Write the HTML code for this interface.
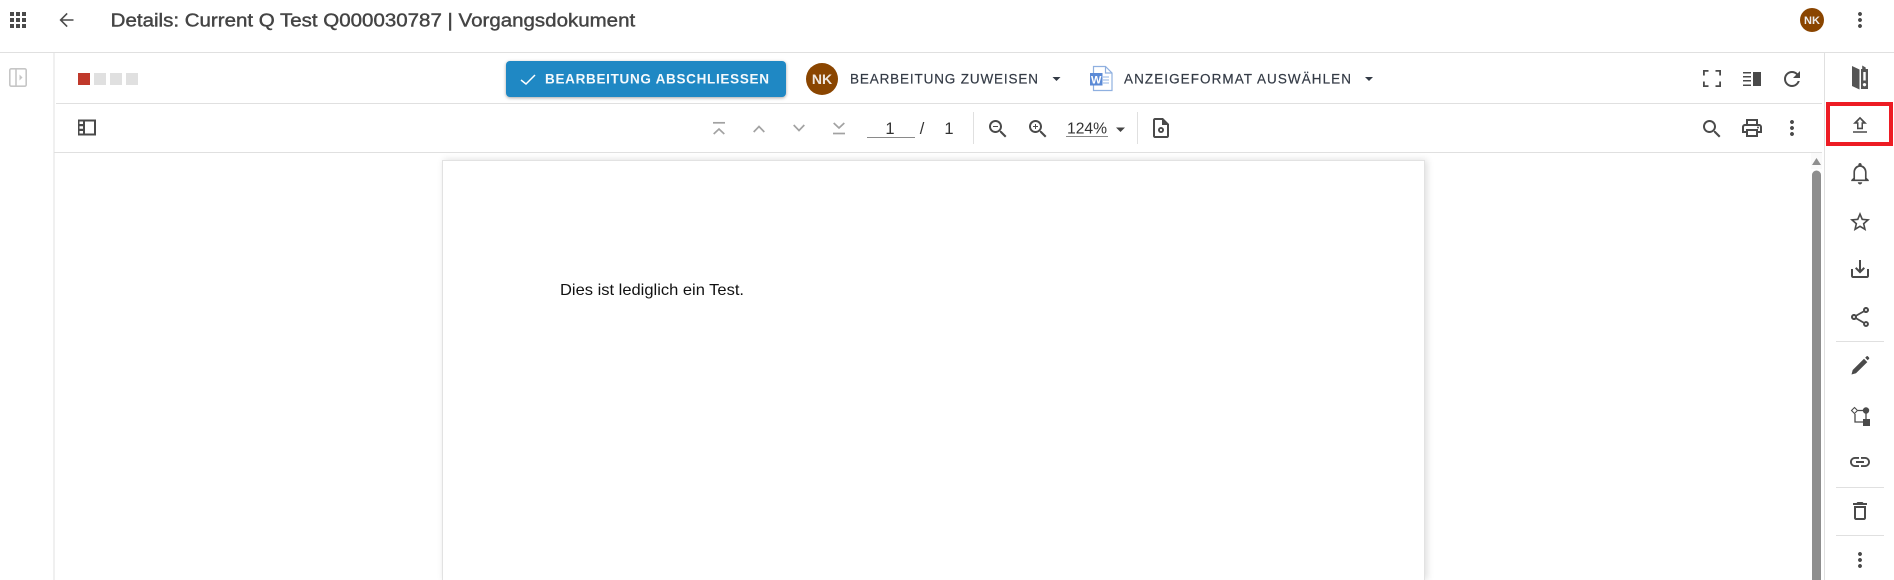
<!DOCTYPE html>
<html lang="de"><head><meta charset="utf-8"><title>Details: Current Q Test Q000030787 | Vorgangsdokument</title>
<style>
html,body{margin:0;padding:0;width:1894px;height:580px;overflow:hidden;background:#fff}
.pg{position:absolute;left:442px;top:160px;width:983px;height:420px;background:#fff;border:1px solid #e2e2e2;border-bottom:none;box-sizing:border-box;box-shadow:2px 0 7px rgba(0,0,0,.14)}
.btn{position:absolute;left:506px;top:61px;width:280px;height:36px;background:#1f88c4;border-radius:4px;box-shadow:0 1px 3px rgba(0,0,0,.35)}
.clip{position:absolute;left:0;top:0;width:1894px;height:580px;overflow:hidden}
svg{position:absolute;left:0;top:0}
text{font-family:"Liberation Sans",sans-serif}
</style></head><body>
<div class="clip"><div class="pg"></div><div class="btn"></div>
<svg width="1894" height="580" viewBox="0 0 1894 580" xmlns="http://www.w3.org/2000/svg">
<!-- lines -->
<g fill="#e0e0e0">
<rect x="0" y="52" width="1894" height="1"/>
<rect x="53.500" y="52" width="1" height="528"/>
<rect x="56" y="103" width="1766" height="1"/>
<rect x="54" y="152" width="1768" height="1"/>
<rect x="1824" y="52" width="1" height="528"/>
<rect x="973" y="112" width="1" height="32"/>
<rect x="1137" y="112" width="1" height="32"/>
<rect x="1836" y="341" width="48" height="1"/>
<rect x="1836" y="487" width="48" height="1"/>
<rect x="1836" y="535" width="48" height="1"/>
</g>
<!-- top bar -->
<g fill="#4a4a4a">
<path transform="translate(6,8)" d="M4 8h4V4H4v4zm6 12h4v-4h-4v4zm-6 0h4v-4H4v4zm0-6h4v-4H4v4zm6 0h4v-4h-4v4zm6-10v4h4V4h-4zm-6 4h4V4h-4v4zm6 6h4v-4h-4v4zm0 6h4v-4h-4v4z"/>
<path d="M73.500 19.200H62.500l5.200-5.200-1.100-1.100L59.500 20l7.100 7.100 1.100-1.100-5.200-5.200h11z"/>
<path transform="translate(1848,8)" d="M12 8c1.100 0 2-.9 2-2s-.9-2-2-2-2 .9-2 2 .9 2 2 2zm0 2c-1.100 0-2 .9-2 2s.9 2 2 2 2-.9 2-2-.9-2-2-2zm0 6c-1.100 0-2 .9-2 2s.9 2 2 2 2-.9 2-2-.9-2-2-2z"/>
</g>
<text x="110.700" y="26.500" font-size="18" fill="#444" stroke="#444" stroke-width=".4" textLength="524.500" lengthAdjust="spacingAndGlyphs">Details: Current Q Test Q000030787 | Vorgangsdokument</text>
<circle cx="1812" cy="20" r="12" fill="#8a4500"/>
<text x="1812" y="24" font-size="11" font-weight="bold" fill="#eee" text-anchor="middle">NK</text>
<!-- left rail icon -->
<g fill="none" stroke="#c6c6c6" stroke-width="1.600">
<rect x="9.800" y="68.800" width="16.400" height="17.400" rx="1.500"/>
<path d="M16 69v17"/>
</g>
<path d="M19.500 74.500l3 3-3 3z" fill="#c6c6c6"/>
<!-- status squares -->
<rect x="78" y="73" width="12" height="12" fill="#c0392b"/>
<rect x="94" y="73" width="12" height="12" fill="#e0e0e0"/>
<rect x="110" y="73" width="12" height="12" fill="#e0e0e0"/>
<rect x="126" y="73" width="12" height="12" fill="#e0e0e0"/>
<!-- button -->
<polyline points="521,80 526,84 535,75" fill="none" stroke="#fff" stroke-width="1.500"/>
<text x="545" y="83.500" font-size="13.500" font-weight="bold" fill="#f4f9fc" textLength="224" lengthAdjust="spacing">BEARBEITUNG ABSCHLIESSEN</text>
<circle cx="822" cy="79" r="16" fill="#8a4500"/>
<text x="822" y="84" font-size="14" font-weight="bold" fill="#f0e8e0" text-anchor="middle">NK</text>
<text x="850" y="83.500" font-size="13.500" fill="#333a45" stroke="#333a45" stroke-width=".2" textLength="188" lengthAdjust="spacing">BEARBEITUNG ZUWEISEN</text>
<path d="M1052.500 77h8l-4 4z" fill="#333a45"/>
<!-- word icon -->
<path d="M1093.500 66.500h12l6.500 6.500v17.500h-18.500z" fill="#fff" stroke="#8fb0e0" stroke-width="1.200"/>
<path d="M1105.500 66.500v6.500h6.500" fill="none" stroke="#8fb0e0" stroke-width="1.200"/>
<path d="M1103 77h6M1103 80h6M1103 83h6" stroke="#a9c3ea" stroke-width="1.200"/>
<rect x="1090" y="73" width="12.500" height="12.500" fill="#5b8ad6"/>
<text x="1096.200" y="83.500" font-size="11" font-weight="bold" fill="#fff" text-anchor="middle">W</text>
<text x="1124" y="83.500" font-size="13.500" fill="#333a45" stroke="#333a45" stroke-width=".2" textLength="227" lengthAdjust="spacing">ANZEIGEFORMAT AUSWÄHLEN</text>
<path d="M1365 77h8l-4 4z" fill="#333a45"/>
<!-- row1 right icons -->
<g fill="none" stroke="#4a4a4a" stroke-width="1.800">
<path d="M1703.900 75.500v-4.600h4.600M1715.500 70.900h4.600v4.600M1720.100 81.500v4.600h-4.600M1708.500 86.100h-4.600v-4.600"/>
</g>
<g fill="#4a4a4a">
<rect x="1743" y="72" width="8" height="1.500"/><rect x="1743" y="76" width="8" height="1.500"/><rect x="1743" y="80" width="8" height="1.500"/><rect x="1743" y="84.500" width="8" height="1.500"/>
<rect x="1753" y="72" width="8" height="14"/>
<path transform="translate(1780,67)" d="M17.650 6.350C16.200 4.900 14.210 4 12 4c-4.420 0-7.990 3.580-7.990 8s3.570 8 7.990 8c3.730 0 6.840-2.550 7.730-6h-2.080c-.82 2.330-3.040 4-5.650 4-3.310 0-6-2.690-6-6s2.690-6 6-6c1.660 0 3.140.69 4.220 1.780L13 11h7V4l-2.350 2.350z"/>
</g>
<!-- row2 -->
<path d="M78 119.500h18v16H78zM85 121.500v12h9v-12zM79.500 121.500v2.500h3.500v-2.500zM79.500 126.300v2.500h3.500v-2.500zM79.500 131v2.500h3.500v-2.500z" fill="#4a4a4a" fill-rule="evenodd"/>
<g fill="none" stroke="#a2a2a2" stroke-width="1.700">
<path d="M713 122.800h12"/><path d="M713.700 134l5.300-5 5.300 5"/>
<path d="M753.700 132l5.300-5.500 5.300 5.500"/>
<path d="M793.700 125l5.300 5.500 5.300-5.500"/>
<path d="M833.700 123l5.300 5 5.300-5"/><path d="M833 133.500h12"/>
</g>
<rect x="867" y="137" width="48" height="1" fill="#8a8a8a"/>
<g fill="#333" font-size="16.500">
<text x="890" y="134" text-anchor="middle">1</text>
<text x="922" y="134" text-anchor="middle">/</text>
<text x="949" y="134" text-anchor="middle">1</text>
</g>
<text x="1067" y="133.500" font-size="16" fill="#333" textLength="40" lengthAdjust="spacingAndGlyphs">124%</text>
<rect x="1066" y="136" width="42" height="1" fill="#8a8a8a"/>
<path d="M1116 127.500h9l-4.500 4.500z" fill="#444"/>
<g fill="#4a4a4a">
<path transform="translate(986,117)" d="M15.500 14h-.79l-.28-.27C15.410 12.590 16 11.110 16 9.500 16 5.910 13.090 3 9.500 3S3 5.910 3 9.500 5.910 16 9.500 16c1.610 0 3.090-.59 4.230-1.570l.27.28v.79l5 4.990L20.490 19l-4.990-5zm-6 0C7.010 14 5 11.990 5 9.500S7.010 5 9.500 5 14 7.010 14 9.500 11.990 14 9.500 14zM7 9h5v1H7z"/>
<path transform="translate(1026,117)" d="M15.500 14h-.79l-.28-.27C15.410 12.590 16 11.110 16 9.500 16 5.910 13.090 3 9.500 3S3 5.910 3 9.500 5.910 16 9.500 16c1.610 0 3.090-.59 4.230-1.570l.27.28v.79l5 4.990L20.490 19l-4.990-5zm-6 0C7.010 14 5 11.990 5 9.500S7.010 5 9.500 5 14 7.010 14 9.500 11.990 14 9.500 14zM12 10h-2v2H9v-2H7V9h2V7h1v2h2v1z"/>
<path transform="translate(1149,116)" d="M14 2H6c-1.100 0-2 .9-2 2v16c0 1.100.9 2 2 2h12c1.100 0 2-.9 2-2V8l-6-6zm4 18H6V4h7v5h5v11z"/>
<circle cx="1161" cy="130" r="3"/><circle cx="1161" cy="130" r="1.100" fill="#fff"/>
<path transform="translate(1700,117)" d="M15.500 14h-.79l-.28-.27C15.410 12.590 16 11.110 16 9.500 16 5.910 13.090 3 9.500 3S3 5.910 3 9.500 5.910 16 9.500 16c1.610 0 3.090-.59 4.230-1.570l.27.28v.79l5 4.990L20.490 19l-4.990-5zm-6 0C7.010 14 5 11.990 5 9.500S7.010 5 9.500 5 14 7.010 14 9.500 11.990 14 9.500 14z"/>
<path transform="translate(1740,116)" d="M19 8h-1V3H6v5H5c-1.660 0-3 1.340-3 3v6h4v4h12v-4h4v-6c0-1.660-1.340-3-3-3zM8 5h8v3H8V5zm8 12v2H8v-4h8v2zm2-2v-2H6v2H4v-4c0-.55.45-1 1-1h14c.55 0 1 .45 1 1v4h-2z"/>
<circle cx="1758" cy="127.500" r="1"/>
<path transform="translate(1780,116)" d="M12 8c1.100 0 2-.9 2-2s-.9-2-2-2-2 .9-2 2 .9 2 2 2zm0 2c-1.100 0-2 .9-2 2s.9 2 2 2 2-.9 2-2-.9-2-2-2zm0 6c-1.100 0-2 .9-2 2s.9 2 2 2 2-.9 2-2-.9-2-2-2z"/>
</g>
<!-- document text -->
<text x="560" y="295" font-size="16" fill="#111" textLength="184" lengthAdjust="spacingAndGlyphs">Dies ist lediglich ein Test.</text>
<!-- scrollbar -->
<rect x="1811" y="153" width="11" height="16" fill="#fafafa"/>
<path d="M1812 165l4.500-7 4.500 7z" fill="#8e8e8e"/>
<path d="M1812 580V175a4.500 4.500 0 0 1 9 0v405z" fill="#8e8e8e"/>
<!-- right rail -->
<g fill="#4a4a4a">
<path d="M1852 66l7.500 3.500v20l-7.500-3.500z" fill="#555"/>
<path d="M1861 69l1.200 0 0-3.500 3.500 2 0 1.500h2.300v20h-7zM1863.300 72v8.500h2.400v-8.500zM1864.500 83a1.700 1.700 0 1 0 .01 0z" fill-rule="evenodd" fill="#555"/>
<path d="M1860 116.800l-7 7h4v5.400h6v-5.400h4zM1860 119l2.800 3.200h-1.300v5.400h-3v-5.400h-1.300zM1853 131.200h14v1.600h-14z" fill-rule="evenodd"/>
<path transform="translate(1846.800,160.250) scale(1.100)" d="M12 22c1.100 0 2-.9 2-2h-4c0 1.100.9 2 2 2zm6-6v-5c0-3.070-1.630-5.640-4.500-6.320V4c0-.83-.67-1.500-1.500-1.500s-1.500.67-1.500 1.500v.68C7.640 5.360 6 7.920 6 11v5l-2 2v1h16v-1l-2-2zm-1.500 1.500H7.500V11c0-2.480 2-5 4.500-5s4.500 2.520 4.500 5v6.500z"/>
<path transform="translate(1848,210)" d="M22 9.240l-7.190-.62L12 2 9.190 8.630 2 9.240l5.460 4.730L5.820 21 12 17.270 18.180 21l-1.630-7.030L22 9.240zM12 15.400l-3.760 2.270 1-4.280-3.320-2.880 4.380-.38L12 6.100l1.710 4.040 4.380.38-3.320 2.880 1 4.280L12 15.400z"/>
<path transform="translate(1848,257)" d="M19 12v7H5v-7H3v7c0 1.100.9 2 2 2h14c1.100 0 2-.9 2-2v-7h-2zm-6 .67l2.590-2.580L17 11.500l-5 5-5-5 1.410-1.410L11 12.670V3h2z"/>
<path transform="translate(1848,305)" d="M18 16.080c-.76 0-1.440.3-1.960.77L8.910 12.700c.05-.23.09-.46.09-.7s-.04-.47-.09-.7l7.050-4.110c.54.5 1.250.81 2.040.81 1.660 0 3-1.340 3-3s-1.340-3-3-3-3 1.340-3 3c0 .24.04.47.09.7L8.040 9.810C7.500 9.310 6.790 9 6 9c-1.660 0-3 1.340-3 3s1.340 3 3 3c.79 0 1.500-.31 2.040-.81l7.120 4.160c-.05.21-.08.43-.08.65 0 1.610 1.310 2.920 2.920 2.920s2.920-1.310 2.920-2.920-1.310-2.920-2.920-2.920zM18 4c.55 0 1 .45 1 1s-.45 1-1 1-1-.45-1-1 .45-1 1-1zM6 13c-.55 0-1-.45-1-1s.45-1 1-1 1 .45 1 1-.45 1-1 1zm12 7.020c-.55 0-1-.45-1-1s.45-1 1-1 1 .45 1 1-.45 1-1 1z"/>
<path d="M1851.500 374.500l1.200-4.500L1864 358.800l3.300 3.300L1856 373.300zM1865.200 357.700l1.300-1.300a1 1 0 0 1 1.400 0l1.100 1.100a1 1 0 0 1 0 1.400l-1.300 1.300z"/>
<circle cx="1866" cy="410.500" r="3.200"/>
<rect x="1863" y="419" width="7" height="7"/>
<path d="M1858 410.500h5M1855 414v8h8M1866 413v6" fill="none" stroke="#4a4a4a" stroke-width="1.300"/>
<path d="M1854.500 407.500l3 3-3 3-3-3z" fill="#fff" stroke="#4a4a4a" stroke-width="1.100"/>
<path transform="translate(1848,450)" d="M3.900 12c0-1.710 1.390-3.100 3.100-3.100h4V7H7c-2.760 0-5 2.240-5 5s2.240 5 5 5h4v-1.900H7c-1.710 0-3.100-1.390-3.100-3.100zM8 13h8v-2H8v2zm9-6h-4v1.900h4c1.710 0 3.100 1.390 3.100 3.100s-1.390 3.100-3.100 3.100h-4V17h4c2.760 0 5-2.240 5-5s-2.240-5-5-5z"/>
<path transform="translate(1848,499)" d="M6 19c0 1.100.9 2 2 2h8c1.100 0 2-.9 2-2V7H6v12zM8 9h8v10H8V9zm7.500-5l-1-1h-5l-1 1H5v2h14V4h-3.500z"/>
<path transform="translate(1848,548)" d="M12 8c1.100 0 2-.9 2-2s-.9-2-2-2-2 .9-2 2 .9 2 2 2zm0 2c-1.100 0-2 .9-2 2s.9 2 2 2 2-.9 2-2-.9-2-2-2zm0 6c-1.100 0-2 .9-2 2s.9 2 2 2 2-.9 2-2-.9-2-2-2z"/>
</g>
<rect x="1828" y="104" width="63" height="40" fill="none" stroke="#ed1c24" stroke-width="4"/>
</svg></div>
</body></html>
